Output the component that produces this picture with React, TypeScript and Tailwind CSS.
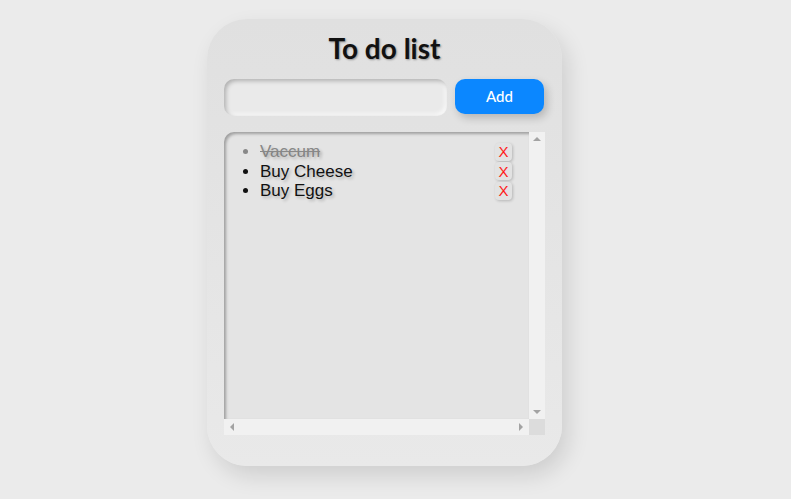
import { useState } from 'react';

type Todo = { id: number; text: string; done: boolean };

const initialTodos: Todo[] = [
  { id: 1, text: 'Vaccum', done: true },
  { id: 2, text: 'Buy Cheese', done: false },
  { id: 3, text: 'Buy Eggs', done: false },
];

// fake classic scrollbar arrow
function Arrow({ dir }: { dir: 'up' | 'down' | 'left' | 'right' }) {
  const points = {
    up: '0,4 4,0 8,4',
    down: '0,0 8,0 4,4',
    left: '4,0 4,8 0,4',
    right: '0,0 4,4 0,8',
  }[dir];
  const vertical = dir === 'up' || dir === 'down';
  return (
    <svg width={vertical ? 8 : 4} height={vertical ? 4 : 8} viewBox={vertical ? '0 0 8 4' : '0 0 4 8'}>
      <polygon points={points} fill="#a3a3a3" />
    </svg>
  );
}

export default function App() {
  const [todos, setTodos] = useState<Todo[]>(initialTodos);
  const [value, setValue] = useState('');

  return (
    <div className="min-h-screen bg-[#ebebeb] pt-[19px] pl-[207px]">
      <div className="flex w-[355px] flex-col rounded-[40px] bg-gradient-to-b from-[#e0e0e0] to-[#e9e9e9] px-[17px] pt-[7px] pb-[31px] shadow-[6px_10px_22px_rgba(0,0,0,0.12)]">
        <h1 className="flex h-[44px] items-center justify-center font-['Lato',sans-serif] text-[28px] font-bold text-[#111] text-shadow-[1px_1px_2px_rgb(0_0_0/0.35)]">
          To do list
        </h1>

        <form
          className="mt-[9px] flex gap-[8px]"
          onSubmit={(e) => {
            e.preventDefault();
            if (!value.trim()) return;
            setTodos([...todos, { id: Date.now(), text: value, done: false }]);
            setValue('');
          }}
        >
          <input
            value={value}
            onChange={(e) => setValue(e.target.value)}
            className="h-[37px] w-[223px] rounded-[10px] bg-[#eaeaea] px-3 outline-none shadow-[inset_2px_2px_4px_rgba(0,0,0,0.25),inset_-2px_-2px_4px_rgba(255,255,255,0.8)]"
          />
          <button
            type="submit"
            className="h-[35px] w-[89px] rounded-[10px] bg-[#0b87ff] font-['Lato',sans-serif] text-[15px] font-medium text-white shadow-[3px_4px_8px_rgba(0,0,0,0.2)]"
          >
            Add
          </button>
        </form>

        <div className="mt-[16px] grid h-[303px] w-[321px] grid-cols-[1fr_16px] grid-rows-[1fr_16px]">
          <div className="overflow-hidden rounded-tl-[10px] bg-[#e4e4e4] shadow-[inset_2px_2px_3px_rgba(0,0,0,0.3)]">
            <ul className="list-disc pt-[10px] pr-[17px] pl-[36px] font-['Liberation_Sans',Arial,sans-serif] text-[17px] leading-[19.5px]">
              {todos.map((t) => (
                <li
                  key={t.id}
                  className={t.done ? 'text-[#888]' : 'text-[#111]'}
                >
                  <div className="flex items-center justify-between">
                    <span
                      onClick={() =>
                        setTodos(todos.map((x) => (x.id === t.id ? { ...x, done: !x.done } : x)))
                      }
                      className={`cursor-pointer text-shadow-[2px_2px_3px_rgb(0_0_0/0.22)] ${t.done ? 'line-through' : ''}`}
                    >
                      {t.text}
                    </span>
                    <button
                      onClick={() => setTodos(todos.filter((x) => x.id !== t.id))}
                      className="flex h-[18px] w-[17px] items-center justify-center rounded-[4px] bg-[#e2e2e2] font-['Liberation_Sans',Arial,sans-serif] text-[15px] leading-none text-[#ff1a1a] shadow-[1px_1px_3px_rgba(0,0,0,0.2)]"
                    >
                      X
                    </button>
                  </div>
                </li>
              ))}
            </ul>
          </div>

          <div className="flex flex-col items-center justify-between bg-[#f1f1f1] py-[5px]">
            <Arrow dir="up" />
            <Arrow dir="down" />
          </div>
          <div className="flex items-center justify-between bg-[#f1f1f1] px-[6px]">
            <Arrow dir="left" />
            <Arrow dir="right" />
          </div>
          <div className="bg-[#dcdcdc]" />
        </div>
      </div>
    </div>
  );
}
